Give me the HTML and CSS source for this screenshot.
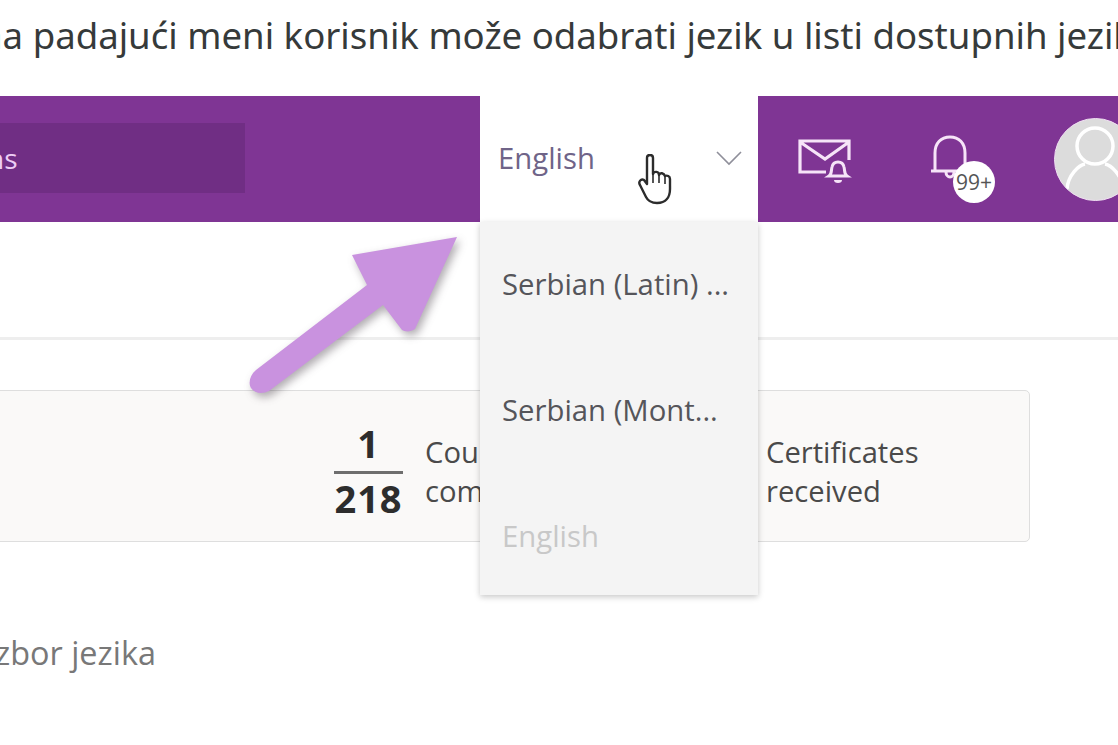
FILE: index.html
```html
<!DOCTYPE html>
<html lang="sr">
<head>
<meta charset="utf-8">
<title>Izbor jezika</title>
<link rel="stylesheet" href="styles.css">
</head>
<body>
<div class="page">
  <p class="caption">na padajući meni korisnik može odabrati jezik u listi dostupnih jezika</p>
  <header class="nav">
    <div class="search"><span class="search-text">ns</span></div>
    <div class="lang">
      <span class="lang-label">English</span>
      <svg class="chevron" width="26" height="16" viewBox="0 0 26 16"><path d="M1 2 13 14 25 2" fill="none" stroke="#8f8f9a" stroke-width="1.6"/></svg>
    </div>
    <div class="nav-icons">
      <svg class="mail" width="54" height="46" viewBox="0 0 54 46"><path d="M28 33H2V2h49v19M2 3l25 17L51 3" fill="none" stroke="#f6e4f8" stroke-width="3.200"/><path d="M31 37c3-2 2-5 3-9 .6-3 3-5 6-5s5.400 2 6 5c1 4 0 7 3 9z" fill="#7f3594" stroke="#f6e4f8" stroke-width="3"/><path d="M36 41a4 3 0 0 0 8 0z" fill="#f6e4f8"/></svg>
      <div class="bell-wrap">
        <svg width="42" height="46" viewBox="0 0 42 46"><path d="M5 35V18C5 8 11 2 20 2s15 6 15 16v17M1 36h38M16 37c0 3 2 5 4 5s4-2 4-5" fill="none" stroke="#f6e4f8" stroke-width="3"/></svg>
        <span class="badge">99+</span>
      </div>
      <div class="avatar">
        <svg width="82" height="82" viewBox="0 0 82 82"><circle cx="40" cy="27" r="18" fill="none" stroke="#fff" stroke-width="3.500"/><path d="M12 70c1-14 12-24 18-25M68 70C67 56 56 46 50 45" fill="none" stroke="#fff" stroke-width="3.500"/></svg>
      </div>
    </div>
  </header>
  <div class="divider"></div>
  <section class="stats">
    <div class="stat">
      <div class="fraction"><span class="num">1</span><span class="den">218</span></div>
      <div class="stat-text">Courses<br>completed</div>
    </div>
    <div class="stat-text">Certificates<br>received</div>
  </section>
  <p class="footnote">Izbor jezika</p>
</div>
<ul class="menu">
  <li>Serbian (Latin) ...</li>
  <li>Serbian (Mont...</li>
  <li class="off">English</li>
</ul>
<svg class="arrow" width="222" height="172" viewBox="0 0 222 172">
  <path d="M210 11 105 29 120 59 9 144C3 149 1 157 4 162 8 168 16 168 22 165L136 79 155 104C158 106 164 106 168 103Z" fill="#c992df"/>
</svg>
<svg class="cursor" width="34" height="52" viewBox="0 0 34 52"><path d="M9 4c0-4 6-4 6 0v16c1-3 6-3 6 1 1-3 5-2 6 1 2-1 5 0 5 3v10c0 8-4 14-13 14-6 0-9-2-11-6L2 31c-2-3 1-7 4-5l3 4z" fill="#fff" stroke="#2c2c2c" stroke-width="2.400" stroke-linejoin="round"/><path d="M15 20v9M21 21v8M27 23v7" stroke="#2c2c2c" stroke-width="1.600" fill="none"/></svg>
</body>
</html>
```
FILE: styles.css
```css
html, body {
  margin: 0;
  padding: 0;
  width: 1118px;
  height: 745px;
  overflow: hidden;
  background: #fff;
}
body {
  position: relative;
  font-family: "Open Sans", "Noto Sans", sans-serif;
}
.page {
  display: flex;
  flex-direction: column;
  width: 1118px;
}
.caption {
  margin: 13px 0 0 -20px;
  height: 83px;
  font-family: "Noto Sans", "Open Sans", sans-serif;
  font-size: 36.600px;
  line-height: 44px;
  color: #363a3a;
  white-space: nowrap;
}
.nav {
  display: flex;
  height: 126px;
  background: #7f3594;
}
.search {
  width: 245px;
  height: 70px;
  margin-top: 27px;
  margin-right: 235px;
  background: #702e84;
  display: flex;
  align-items: center;
  flex: none;
}
.search-text {
  margin-left: -13px;
  color: #edcdf5;
  font-size: 28px;
}
.lang {
  width: 278px;
  flex: none;
  background: #fff;
  display: flex;
  align-items: center;
  justify-content: space-between;
  padding: 0 16px 0 18px;
  box-sizing: border-box;
}
.lang-label {
  font-size: 29.300px;
  color: #6f6488;
  margin-top: -2px;
}
.chevron {
  margin-top: -3px;
}
.nav-icons {
  display: flex;
  align-items: flex-start;
  flex: none;
}
.mail {
  margin: 43px 0 0 40px;
}
.bell-wrap {
  position: relative;
  margin: 39px 0 0 78px;
  width: 42px;
  height: 46px;
}
.badge {
  position: absolute;
  left: 23px;
  top: 26px;
  width: 42px;
  height: 42px;
  border-radius: 50%;
  background: #fff;
  color: #555;
  font-size: 21px;
  line-height: 42px;
  text-align: center;
}
.avatar {
  width: 81px;
  height: 81px;
  margin: 22px 0 0 82px;
  border-radius: 50%;
  background: #dcdcdc;
  border: 1px solid #f0dff2;
  overflow: hidden;
  flex: none;
}
.divider {
  height: 3px;
  margin-top: 115px;
  background: #eeeeee;
}
.stats {
  display: flex;
  align-items: center;
  box-sizing: border-box;
  width: 1040px;
  height: 152px;
  margin: 50px 0 0 -10px;
  padding: 12px 0 0 343px;
  background: #faf9f8;
  border: 1px solid #dedede;
  border-radius: 5px;
}
.stat {
  display: flex;
  align-items: center;
  gap: 22px;
  width: 432px;
  flex: none;
}
.fraction {
  display: flex;
  flex-direction: column;
  align-items: center;
  width: 69px;
  margin-top: -3px;
  color: #2d2d2d;
  font-weight: 700;
  font-size: 38px;
  letter-spacing: 1px;
  line-height: 43px;
}
.num {
  width: 100%;
  text-align: center;
  border-bottom: 3px solid #6e6e6e;
  padding-bottom: 6px;
}
.den {
  padding-top: 3px;
}
.stat-text {
  font-size: 29.200px;
  line-height: 39px;
  color: #4a4a4a;
}
.footnote {
  margin: 91px 0 0 -14px;
  font-size: 32.400px;
  line-height: 38px;
  color: #787878;
  white-space: nowrap;
}
.menu {
  position: absolute;
  left: 480px;
  top: 222px;
  width: 278px;
  height: 373px;
  margin: 0;
  padding: 0;
  list-style: none;
  background: #f4f4f4;
  box-shadow: 0 2px 6px rgba(0, 0, 0, .22);
  display: flex;
  flex-direction: column;
}
.menu li {
  flex: none;
  height: 126px;
  padding: 40px 0 0 22px;
  box-sizing: border-box;
  font-size: 29.300px;
  line-height: 44px;
  color: #55555a;
  white-space: nowrap;
}
.menu li.off {
  height: 121px;
  color: #c8c8c8;
}
.arrow {
  position: absolute;
  left: 247px;
  top: 226px;
  filter: drop-shadow(3px 4px 4px rgba(60, 50, 60, .4));
}
.cursor {
  position: absolute;
  left: 638px;
  top: 154px;
}
```
